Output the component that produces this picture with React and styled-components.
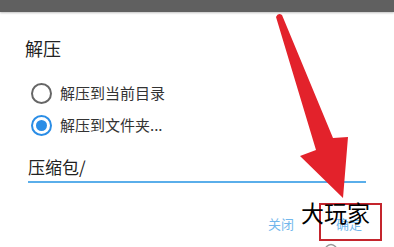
import React from "react";
import styled, { createGlobalStyle } from "styled-components";

const Global = createGlobalStyle`
  html, body { margin: 0; padding: 0; background: #fff; }
  body { font-family: "Noto Sans CJK SC", "Noto Sans", sans-serif; }
`;

const Page = styled.div`
  position: relative;
  width: 394px;
  height: 247px;
  overflow: hidden;
  background: #fff;
  display: flex;
  flex-direction: column;
`;

const TopBar = styled.div`
  height: 12px;
  background: #606060;
  box-shadow: 0 1px 2px rgba(0, 0, 0, 0.25);
  flex-shrink: 0;
`;

const Dialog = styled.div`
  display: flex;
  flex-direction: column;
  padding: 24px 28px 0 25px;
`;

const Title = styled.div`
  font-size: 18px;
  line-height: 24px;
  color: #222;
`;

const RadioList = styled.div`
  display: flex;
  flex-direction: column;
  margin-top: 17px;
`;

const RadioRow = styled.div`
  height: 32px;
  display: flex;
  align-items: center;
  gap: 8px;
  padding-left: 6px;
`;

const RadioCircle = styled.span`
  box-sizing: border-box;
  width: 21px;
  height: 21px;
  border-radius: 50%;
  border: 2px solid ${(p) => (p.$checked ? "#2a8de6" : "#666")};
  display: flex;
  align-items: center;
  justify-content: center;
  &::after {
    content: "";
    display: ${(p) => (p.$checked ? "block" : "none")};
    width: 11px;
    height: 11px;
    border-radius: 50%;
    background: #2a8de6;
  }
`;

const RadioLabel = styled.span`
  font-size: 15px;
  line-height: 20px;
  color: #333;
`;

const Field = styled.div`
  margin: 15px 0 0 3px;
  padding-bottom: 3px;
  border-bottom: 2px solid #5aaeea;
  font-size: 17px;
  line-height: 22px;
  color: #222;
`;

const Actions = styled.div`
  display: flex;
  justify-content: flex-end;
  gap: 42px;
  margin-top: 32px;
  padding-right: 4px;
`;

const ActionButton = styled.span`
  font-size: 13px;
  line-height: 18px;
  color: #72b7ec;
`;

const Overlay = styled.svg`
  position: absolute;
  left: 0;
  top: 0;
  pointer-events: none;
`;

const MarkBox = styled.div`
  position: absolute;
  left: 319px;
  top: 203px;
  width: 63px;
  height: 38px;
  box-sizing: border-box;
  border: 2px solid #c4252d;
`;

const MarkText = styled.div`
  position: absolute;
  left: 301px;
  top: 198px;
  font-size: 23px;
  line-height: 28px;
  color: #000;
  letter-spacing: 0px;
`;

export default function App() {
  return (
    <Page>
      <Global />
      <TopBar />
      <Dialog>
        <Title>解压</Title>
        <RadioList>
          <RadioRow>
            <RadioCircle />
            <RadioLabel>解压到当前目录</RadioLabel>
          </RadioRow>
          <RadioRow>
            <RadioCircle $checked />
            <RadioLabel>解压到文件夹...</RadioLabel>
          </RadioRow>
        </RadioList>
        <Field>压缩包/</Field>
        <Actions>
          <ActionButton>关闭</ActionButton>
          <ActionButton>确定</ActionButton>
        </Actions>
      </Dialog>
      <Overlay width="394" height="247" viewBox="0 0 394 247">
        <path
          d="M276 17 Q278 12 282 15 L333 138 L348 137 L343 198 L300 156 L316 150 Z"
          fill="#e3222b"
        />
        <path d="M326 247 Q331 242 336 247" stroke="#999" strokeWidth="1.5" fill="none" />
      </Overlay>
      <MarkBox />
      <MarkText>大玩家</MarkText>
    </Page>
  );
}
